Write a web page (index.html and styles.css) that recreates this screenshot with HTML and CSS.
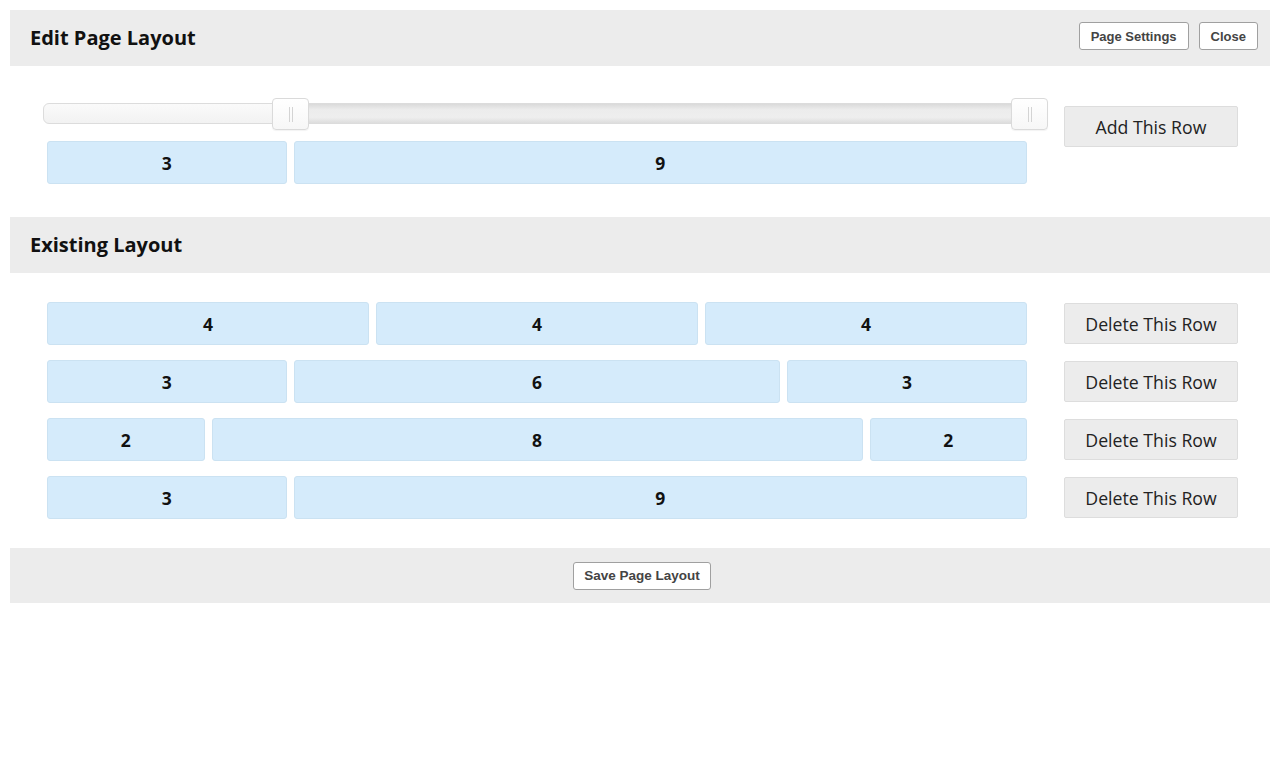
FILE: index.html
```html
<!DOCTYPE html>
<html lang="en">
<head>
  <meta charset="UTF-8">
  <meta name="viewport" content="width=device-width, initial-scale=1.0">
  <title>Edit Page Layout</title>
  <link rel="stylesheet" href="styles.css">
</head>
<body>
  <div class="bar">
    <h2 class="bar__title">Edit Page Layout</h2>
    <div class="bar__actions">
      <button class="btn-small">Page Settings</button>
      <button class="btn-small">Close</button>
    </div>
  </div>

  <div class="section section--new">
    <div class="builder">
      <div class="slider">
        <div class="slider__range"></div>
        <div class="slider__handle slider__handle--a"></div>
        <div class="slider__handle slider__handle--b"></div>
      </div>
      <div class="grid">
        <div class="col span-3">3</div>
        <div class="col span-9">9</div>
      </div>
    </div>
    <button class="btn-row">Add This Row</button>
  </div>

  <div class="bar">
    <h2 class="bar__title">Existing Layout</h2>
  </div>

  <div class="section section--rows">
    <div class="row">
      <div class="grid">
        <div class="col span-4">4</div>
        <div class="col span-4">4</div>
        <div class="col span-4">4</div>
      </div>
      <button class="btn-row">Delete This Row</button>
    </div>
    <div class="row">
      <div class="grid">
        <div class="col span-3">3</div>
        <div class="col span-6">6</div>
        <div class="col span-3">3</div>
      </div>
      <button class="btn-row">Delete This Row</button>
    </div>
    <div class="row">
      <div class="grid">
        <div class="col span-2">2</div>
        <div class="col span-8">8</div>
        <div class="col span-2">2</div>
      </div>
      <button class="btn-row">Delete This Row</button>
    </div>
    <div class="row">
      <div class="grid">
        <div class="col span-3">3</div>
        <div class="col span-9">9</div>
      </div>
      <button class="btn-row">Delete This Row</button>
    </div>
  </div>

  <div class="bar bar--footer">
    <button class="btn-small">Save Page Layout</button>
  </div>
</body>
</html>
```

FILE: styles.css
```css
body{
  margin: 10px;
  background: #fff;
  font-family: "Open Sans", sans-serif;
  color: #111;
}

.bar{
  height: 56px;
  background: #ececec;
  display: flex;
  align-items: center;
  justify-content: space-between;
  padding: 0 12px 0 20px;
}
.bar--footer{
  justify-content: center;
  height: 55px;
}
.bar__title{
  margin: 0;
  font-size: 20px;
  font-weight: 700;
  color: #111;
  position: relative;
  top: -1px;
}
.bar__actions{
  display: flex;
  gap: 10px;
  margin-top: -4px;
}

.btn-small{
  font-family: "Liberation Sans", Arial, sans-serif;
  font-weight: 700;
  font-size: 13px;
  color: #444;
  background: #fff;
  border: 1px solid #a0a0a0;
  border-radius: 3px;
  height: 28px;
  padding: 0 11px;
}
.bar--footer .btn-small{
  font-size: 13.5px;
  padding: 0 10px;
  margin-left: -4px;
}

.btn-row{
  width: 174px;
  height: 41px;
  flex: none;
  background: #ececec;
  border: 1px solid #ddd;
  border-radius: 2px;
  font-family: "Open Sans", sans-serif;
  font-size: 17.7px;
  color: #222;
}

.section{
  padding: 0 32px 0 37px;
}
.section--new{
  display: flex;
  gap: 37px;
  padding-top: 32px;
  padding-bottom: 33px;
}
.section--new .btn-row{
  margin-top: 8px;
}
.section--rows{
  padding-top: 29px;
  padding-bottom: 29px;
  display: flex;
  flex-direction: column;
  gap: 15px;
}

.builder{
  width: 980px;
}

/* dual handle range slider */
.slider{
  position: relative;
  height: 32px;
  margin: 0 -21px 11px -4px;
}
.slider::before{
  content: "";
  position: absolute;
  left: 0;
  right: 0;
  top: 5px;
  height: 19px;
  background: linear-gradient(#fafafa, #f2f2f2);
  border: 1px solid #dcdcdc;
  border-radius: 6px;
}
.slider__range{
  position: absolute;
  left: 250px;
  right: 20px;
  top: 6px;
  height: 19px;
  background: linear-gradient(#dadada, #ececec 30%, #eeeeee 70%, #dddddd);
}
.slider__handle{
  position: absolute;
  top: 0;
  width: 37px;
  height: 32px;
  background: linear-gradient(#fff, #f7f7f7);
  border: 1px solid #dadada;
  border-radius: 4px;
  box-sizing: border-box;
  box-shadow: 0 1px 1px rgba(0, 0, 0, 0.05);
}
.slider__handle::after{
  content: "";
  position: absolute;
  left: 16px;
  top: 8px;
  width: 2px;
  height: 15px;
  border-left: 1px solid #d4d4d4;
  border-right: 1px solid #d4d4d4;
}
.slider__handle--a{
  left: 229px;
}
.slider__handle--b{
  right: 0;
}

.grid{
  width: 980px;
  display: grid;
  grid-template-columns: repeat(12, 1fr);
  gap: 7px;
}
.row{
  display: flex;
  align-items: center;
  gap: 37px;
}
.col{
  height: 43px;
  box-sizing: border-box;
  background: #d5ebfb;
  border: 1px solid #cbe2f2;
  border-radius: 3px;
  display: flex;
  align-items: center;
  justify-content: center;
  font-weight: 700;
  font-size: 17.5px;
  color: #111;
}
.span-2{ grid-column: span 2; }
.span-3{ grid-column: span 3; }
.span-4{ grid-column: span 4; }
.span-6{ grid-column: span 6; }
.span-8{ grid-column: span 8; }
.span-9{ grid-column: span 9; }
```
